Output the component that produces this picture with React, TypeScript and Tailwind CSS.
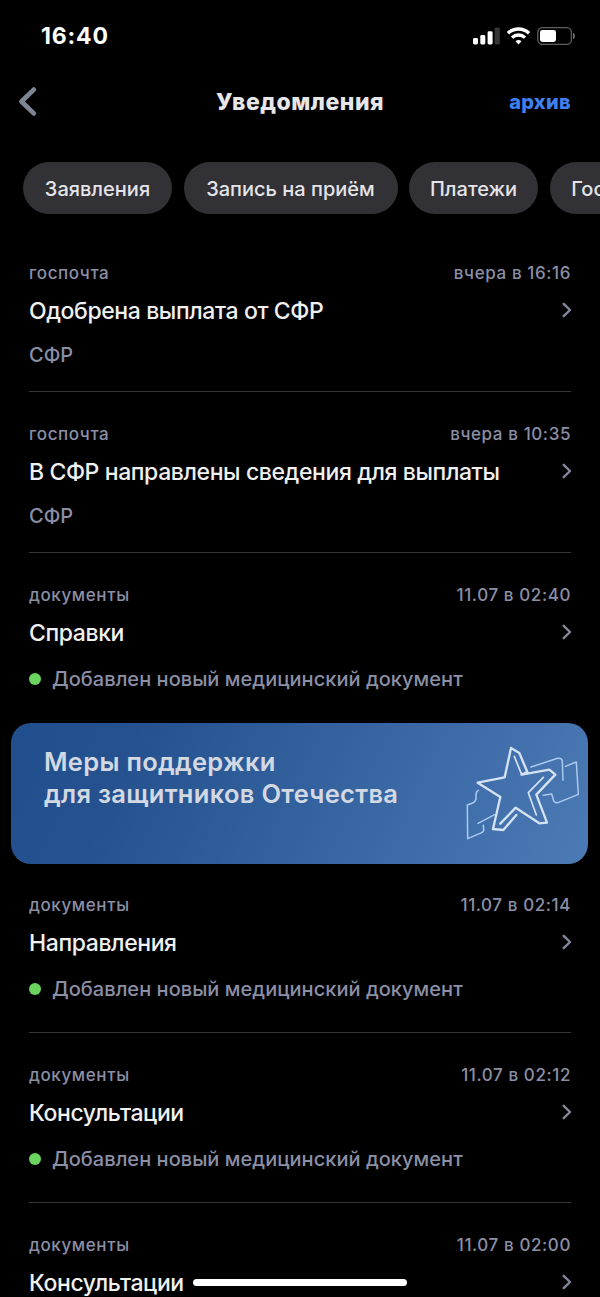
interface Notification {
  category: string;
  date: string;
  title: string;
  text: string;
  fresh?: boolean;
}

const chips = [
  { label: "Заявления", width: "w-[149px]" },
  { label: "Запись на приём", width: "w-[214px]" },
  { label: "Платежи", width: "w-[129px]" },
  { label: "Госпочта", width: "w-[134px]" },
];

const beforeBanner: Notification[] = [
  { category: "госпочта", date: "вчера в 16:16", title: "Одобрена выплата от СФР", text: "СФР" },
  { category: "госпочта", date: "вчера в 10:35", title: "В СФР направлены сведения для выплаты", text: "СФР" },
  { category: "документы", date: "11.07 в 02:40", title: "Справки", text: "Добавлен новый медицинский документ", fresh: true },
];

const afterBanner: Notification[] = [
  { category: "документы", date: "11.07 в 02:14", title: "Направления", text: "Добавлен новый медицинский документ", fresh: true },
  { category: "документы", date: "11.07 в 02:12", title: "Консультации", text: "Добавлен новый медицинский документ", fresh: true },
  { category: "документы", date: "11.07 в 02:00", title: "Консультации", text: "Добавлен новый медицинский документ", fresh: true },
];

function StatusBar() {
  return (
    <div className="flex h-[72px] shrink-0 items-center justify-between pl-[41px] pr-[24px]">
      <span className="text-[23px] font-bold leading-7 tracking-[0.85px] text-white">16:40</span>
      <div className="flex items-center gap-[7px]">
        <svg width="28" height="18" viewBox="-1 0 28 18" fill="#fff">
          <rect x="0" y="11" width="5" height="6.5" rx="1.4" />
          <rect x="7.3" y="8" width="5" height="9.5" rx="1.4" />
          <rect x="14.6" y="4.3" width="5" height="13.2" rx="1.4" />
          <rect x="21.6" y="0.5" width="5.2" height="17" rx="1.4" fill="#363636" />
        </svg>
        <svg width="23" height="18" viewBox="0 0 23 18" fill="none" stroke="#fff" strokeWidth="3.3">
          <path d="M1 6.2a15.2 15.2 0 0 1 21 0" />
          <path d="M5 10.6a9.4 9.4 0 0 1 13 0" />
          <path d="M11.5 17.4l-3-3.1a4.4 4.4 0 0 1 6 0z" fill="#fff" stroke="none" />
        </svg>
        <svg width="39" height="18" viewBox="0 0 39 18" fill="none">
          <rect x="0.8" y="0.7" width="33.6" height="16.6" rx="4.6" stroke="#5e5e5e" strokeWidth="1.3" />
          <rect x="3" y="3" width="16" height="12" rx="2.4" fill="#fff" />
          <path d="M36 5.8c2.7 1 2.7 5.4 0 6.4z" fill="#6a6a6a" />
        </svg>
      </div>
    </div>
  );
}

function Header() {
  return (
    <header className="grid h-[60px] shrink-0 grid-cols-[1fr_auto_1fr] items-center pl-[17px] pr-[29px]">
      <svg width="22" height="32" viewBox="0 0 22 32" fill="none" stroke="#7d8696" strokeWidth="4.8" strokeLinecap="round" strokeLinejoin="round">
        <path d="M16.8 3.6L4.5 15.5L16.8 27.4" />
      </svg>
      <h1 className="pl-3 text-[23px] font-extrabold leading-7 tracking-[0.5px] text-[#e6e6e8]">Уведомления</h1>
      <span className="text-right text-[20px] font-extrabold leading-7 tracking-[0.3px] text-[#3f7fee]">архив</span>
    </header>
  );
}

function NotificationRow({ item, divider = true }: { item: Notification; divider?: boolean }) {
  return (
    <article className="mx-[29px] shrink-0">
      <div className="flex items-center justify-between pt-[31px] text-[17px] font-medium leading-[22px] tracking-[0.6px] text-[#8b8fa5]">
        <span>{item.category}</span>
        <span>{item.date}</span>
      </div>
      <div className="mt-3 flex h-[30px] items-center justify-between">
        <h2 className="whitespace-nowrap text-[23px] font-medium leading-[30px] tracking-[-0.4px] text-[#f0f0f0]">{item.title}</h2>
        <svg className="-mr-[2px]" width="12" height="18" viewBox="0 0 12 18" fill="none" stroke="#85889a" strokeWidth="2.4" strokeLinecap="round" strokeLinejoin="round">
          <path d="M2.7 1.8L9 8L2.7 14.2" />
        </svg>
      </div>
      {item.fresh ? (
        <div className="mt-[19px] flex items-center gap-[11px] pb-[31px]">
          <span className="-mt-px h-3 w-3 rounded-full bg-[#6bd45f]" />
          <span className="whitespace-nowrap text-[20px] font-medium leading-6 tracking-[0.03px] text-[#8b8fa5]">{item.text}</span>
        </div>
      ) : (
        <p className="mt-[17px] pb-6 text-[20px] font-medium leading-6 text-[#8b8fa5]">{item.text}</p>
      )}
      {divider && <div className="h-px bg-[#343436]" />}
    </article>
  );
}

function Banner() {
  return (
    <section className="-mb-px ml-[11px] mr-3 mt-px flex h-[141px] shrink-0 items-start justify-between rounded-[20px] bg-linear-[115deg,#214e8d_0%,#25528f_20%,#3c6ba8_70%,#4b7ab4_100%] pl-[33px] pr-[6px] pt-[22px]">
      <p className="pt-[1px] text-[25.5px] font-semibold leading-8 tracking-[0.3px] text-[#d3d9e3]">
        Меры поддержки
        <br />
        для защитников Отечества
      </p>
      <svg width="117" height="97" viewBox="75 90 351 291" fill="none" strokeLinecap="round" strokeLinejoin="round">
        {/* ribbon behind the star */}
        <g stroke="#abcbee" strokeWidth="4.5">
          <path d="M273 156L353 130Q366 128 367 140L369 196" />
          <path d="M376 154L409 141L415 238L354 263Q341 265 339 250L335 237L310 241" />
          <path d="M115 226Q108 229 108 240L108 252Q106 261 98 264L82 270L83 371L125 353Q132 350 131 341L130 331" />
          <path d="M114 325L164 299" />
        </g>
        {/* star outline with its inner bevel */}
        <g stroke="#d4e2f2">
          <path strokeWidth="7" d="M213 99L194 187L113 203L181 246L159 342L190 345L229 300M213 99L238 114L262 171M213 99L213 99M262 171L245 179L328 164L346 179L289 239L321 323L298 325L227 278L181 326" />
          <path strokeWidth="5" d="M223 124L245 179M310 187L265 233L289 300" />
        </g>
      </svg>
    </section>
  );
}

export default function App() {
  return (
    <div className="relative flex h-[1297px] w-[600px] flex-col overflow-hidden bg-black font-['Inter','Noto_Sans',sans-serif]">
      <StatusBar />
      <Header />
      <nav className="flex shrink-0 gap-[11.5px] overflow-hidden pb-[17px] pl-[23px] pt-[30px]">
        {chips.map(chip => (
          <button
            key={chip.label}
            className={`${chip.width} h-[52px] shrink-0 whitespace-nowrap rounded-full bg-[#323136] pt-[2px] text-[20px] font-medium text-[#e4e4e8]`}
          >
            {chip.label}
          </button>
        ))}
      </nav>
      {beforeBanner.map((item, i) => (
        <NotificationRow key={item.date} item={item} divider={i < beforeBanner.length - 1} />
      ))}
      <Banner />
      {afterBanner.map(item => (
        <NotificationRow key={item.date} item={item} />
      ))}
      {/* Home indicator */}
      <div className="absolute bottom-[11px] left-[193px] h-[7px] w-[214px] rounded-full bg-white" />
    </div>
  );
}
